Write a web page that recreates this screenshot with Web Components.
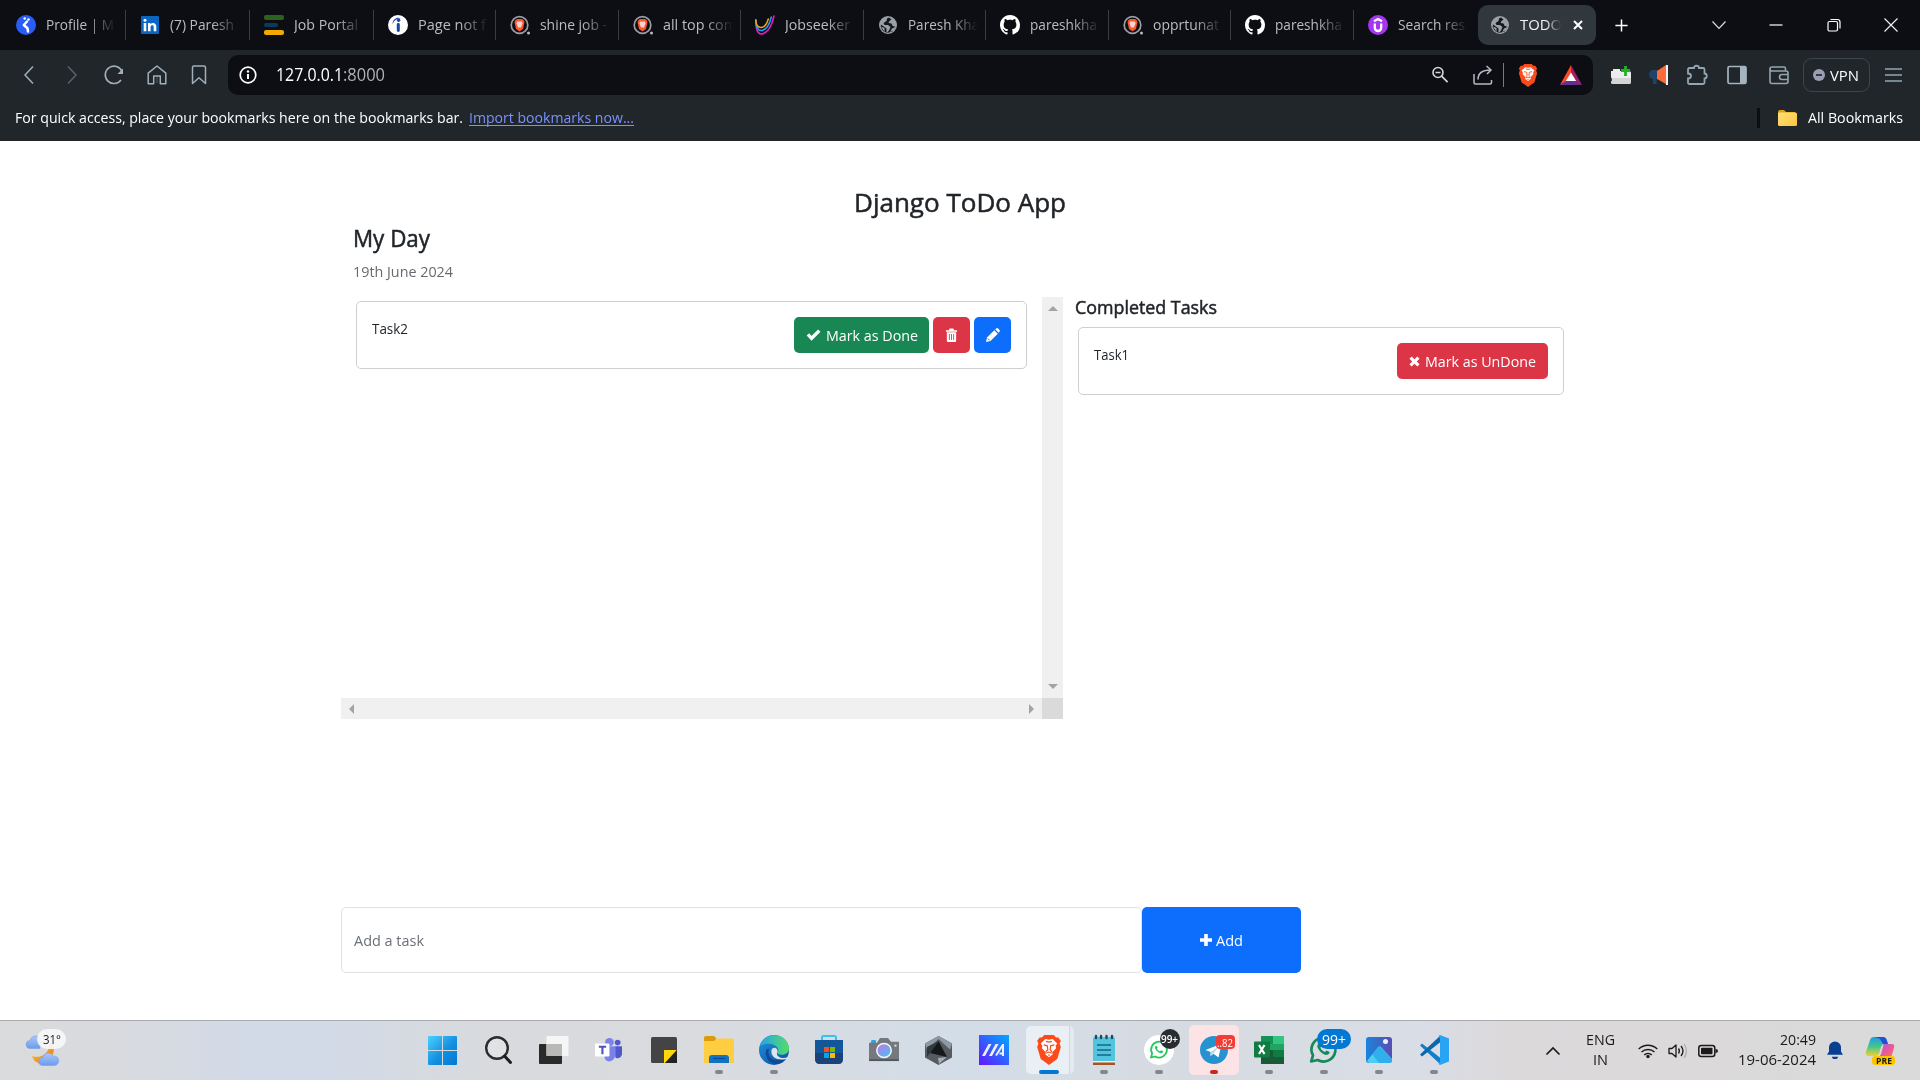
<!DOCTYPE html>
<html lang="en">
<head>
<meta charset="utf-8">
<title>TODO</title>
<style>
html,body{margin:0;height:1080px;width:1920px;overflow:hidden;background:#fff;font-family:"Open Sans","Noto Sans",sans-serif}
body{display:flex;flex-direction:column}
</style>
</head>
<body>
<browser-tabs></browser-tabs>
<browser-toolbar></browser-toolbar>
<bookmarks-bar></bookmarks-bar>
<todo-app></todo-app>
<task-bar></task-bar>
<script>
const lion = `<path d="M5 2 7 0h8l2 2 2 0 2 3-1 2 1 3-3 10-3 2-4 3-4-3-3-2L1 10l1-3-1-2 2-3z" fill="#fb4b1a"/><path d="M11 4l3-.6 4 3.6-1.4 2 .4 2-3.4 3.6.6 1.4-3.2 2.5L7.800 16l.6-1.400L5 11l.4-2L4 7l4-3.600z" fill="#fff"/><path d="M6.500 8.300 9.600 9l.4 3.500L8.300 14M15.500 8.300 12.400 9l-.4 3.500 1.700 1.500M8.700 15.200 11 14.200l2.300 1M8.500 5.300 11 6l2.500-.700M11 16v1.500" fill="none" stroke="#fb4b1a" stroke-width="1"/>`;
const phone = c => `<path d="M10.200 8.600c-.9 0-1.900 1.300-1.900 2.600 0 3 5.300 8.700 9.300 8.700 1.800 0 3-1.400 3.100-2.800l-3.200-1.700-1.600 1.700c-2-.7-3.700-2.400-4.500-4.300l1.200-1.500z" fill="${c}"/>`;
const bubble = c => `<path d="M2.200 26.500 4 20.400A12 12 0 1 1 8.600 25z" fill="none" stroke="${c}" stroke-width="2.700" stroke-linejoin="round"/>` + phone(c);
const cloud = `fill="url(#wc)" stroke="#6f9fe8" stroke-width=".5"`;
// name -> [viewBox width, viewBox height, markup]
const ICONS = {
  pen:[20,20,`<circle cx="10" cy="10" r="10" fill="#2a5cf6"/><path d="M11 6.500 7.800 10l3.700 3.200.5 3.300" fill="none" stroke="#fff" stroke-width="2.500" stroke-linecap="round" stroke-linejoin="round"/><circle cx="8.700" cy="3.500" r="1.200" fill="#fff"/><circle cx="12.500" cy="4.500" r="1.200" fill="#fff"/>`],
  linkedin:[20,20,`<rect x="1" y="1" width="18" height="18" rx="1" fill="#0a66c2"/><path d="M3.700 8h2.600v8.300H3.700zM8 8h2.500v1.200c1.700-2.200 5.800-1.800 5.800 2.300v4.800h-2.600V12c0-2.600-3.100-2.300-3.100 0v4.300H8z" fill="#fff"/><circle cx="5" cy="5.300" r="1.500" fill="#fff"/>`],
  bars:[20,20,`<rect x="0" y="0" width="20" height="5" rx="2" fill="#2b621f"/><rect x="0" y="8" width="14" height="4" rx="2" fill="#0b3958"/><rect x="0" y="15" width="20" height="5" rx="2" fill="#f2a900"/>`],
  indeed:[20,20,`<circle cx="10" cy="10" r="10" fill="#fff"/><rect x="8.800" y="8" width="3" height="9" rx="1.400" fill="#17479e"/><circle cx="10.600" cy="5.300" r="1.700" fill="#17479e"/><path d="M4.500 9c.5-5 4.500-7.500 8.500-5.500-3-.5-6.500 1-8.500 5.500z" fill="#17479e"/>`],
  bravesearch:[20,20,`<circle cx="9.500" cy="10" r="8.300" fill="none" stroke="#9b9da1" stroke-width="1.700"/><path d="M5 5.500 7 4h5l2 1.500.4 2L13 14l-3.500 2.500L6 14 4.600 7.500z" fill="#fb5430"/><path d="M7 6.500h5l.5 2-1.500 4H8L6.500 8.500z" fill="#f6d3cb"/><circle cx="18.500" cy="18" r="1.500" fill="#bbb"/>`],
  swirl:[20,20,`<g fill="none" stroke-width="1.500" stroke-linecap="round"><path d="M.8 5C1 14 2 19 6 19c6 0 11-8 13-18" stroke="#e71bc8"/><path d="M.8 5C1 12 2.500 15.500 6 15.500c5 0 8.500-6 10.300-13.500" stroke="#16a8e8"/><path d="M.8 5C1 10 3 12.500 6 12.500c3.500 0 6-4 7.300-8.500" stroke="#f4a41c"/></g>`],
  globe:[20,20,`<circle cx="10" cy="10" r="9" fill="#9aa0a6"/><path d="M11 2.500 9 3.500 8.500 6l-3 2 1 2h3.500l2.500 2-1 2.500-2 3h-1v-4L3 9.500 2.700 12 5 16l4 2 5.500-1.500L17.500 12l-3-1.200-1-2.300-3-.5 1-2 2-1.500z" fill="#14181d" fill-rule="evenodd"/><path d="M3 11.500 6.500 13v4M12 17l2-3.500 3.300-1.500-1 3z" fill="#9aa0a6"/>`],
  github:[16,16,`<path fill="#fff" d="M8 0C3.580 0 0 3.580 0 8c0 3.540 2.290 6.530 5.470 7.590.4.070.55-.17.55-.38 0-.19-.01-.82-.01-1.490-2.010.37-2.530-.49-2.690-.94-.09-.23-.48-.94-.82-1.130-.28-.15-.68-.52-.01-.53.630-.01 1.080.58 1.230.82.720 1.210 1.870.87 2.330.66.070-.52.280-.87.510-1.070-1.780-.2-3.640-.89-3.640-3.950 0-.87.310-1.590.82-2.150-.08-.2-.36-1.020.08-2.120 0 0 .67-.21 2.200.82.640-.18 1.320-.27 2-.27s1.360.09 2 .27c1.530-1.040 2.200-.82 2.200-.82.440 1.100.160 1.920.080 2.120.510.56.82 1.270.82 2.150 0 3.070-1.870 3.750-3.650 3.950.290.25.54.73.54 1.480 0 1.070-.01 1.930-.01 2.200 0 .21.150.46.55.38A8.010 8.010 0 0 0 16 8c0-4.420-3.580-8-8-8z"/>`],
  udemy:[20,20,`<circle cx="10" cy="10" r="10" fill="#a435f0"/><path d="M6 6.200 10 4l4 2.200M6.800 8.500v4.300a3.200 3.200 0 0 0 6.400 0V8.500" fill="none" stroke="#fff" stroke-width="2.300"/>`],
  x:[16,16,`<path d="M4 4l8 8M12 4l-8 8" stroke="#fff" stroke-width="2"/>`],
  plus:[16,16,`<path d="M8 1.500v13M1.500 8h13" stroke="#fff" stroke-width="1.600"/>`],
  chev:[16,16,`<path d="M1.500 4.500 8 11.300l6.500-6.800" fill="none" stroke="#ddd" stroke-width="1.200"/>`],
  min:[16,16,`<path d="M1.500 8h13" stroke="#fff" stroke-width="1.200"/>`],
  restore:[16,16,`<rect x="2" y="4.500" width="9.500" height="9.500" rx="1.500" fill="none" stroke="#fff" stroke-width="1.200"/><path d="M4.500 2.500h7a2.500 2.500 0 0 1 2.500 2.500v6.500" fill="none" stroke="#fff" stroke-width="1.200"/>`],
  winx:[16,16,`<path d="M1.500 1.500l13 13M14.500 1.500l-13 13" stroke="#eee" stroke-width="1.200"/>`],
  back:[20,20,`<path d="M14 1.500 6 10l8 8.500" fill="none" stroke="#9fb0bb" stroke-width="1.500"/>`],
  fwd:[20,20,`<path d="M6 1.500 14 10l-8 8.500" fill="none" stroke="#56636b" stroke-width="1.500"/>`],
  reload:[20,20,`<path d="M17 15A8.700 8.700 0 1 1 18 6.500" fill="none" stroke="#9fb0bb" stroke-width="1.600"/><path d="M19 3.500v5.500h-5.500z" fill="#9fb0bb"/>`],
  home:[20,20,`<path d="M1.200 18.700V8.200L10 1l8.800 7.200v10.500h-5.500V11H6.700v7.700z" fill="none" stroke="#9fb0bb" stroke-width="1.500" stroke-linejoin="round"/><path d="M10 12v6" stroke="#56636b"/>`],
  mark:[20,20,`<path d="M3.500 18.500v-16q0-1.500 1.500-1.500h10q1.500 0 1.500 1.500v16L10 12.800z" fill="none" stroke="#9fb0bb" stroke-width="1.500" stroke-linejoin="round"/>`],
  info:[18,18,`<circle cx="9" cy="9" r="7.800" fill="none" stroke="#fff" stroke-width="1.700"/><path d="M9 8v5" stroke="#fff" stroke-width="2"/><circle cx="9" cy="5.500" r="1.200" fill="#fff"/>`],
  zoomout:[18,18,`<circle cx="7" cy="6.500" r="5" fill="none" stroke="#d3d5d7" stroke-width="1.600"/><path d="M4.500 6.500h5M10.600 10.200l6 6" stroke="#d3d5d7" stroke-width="1.700"/>`],
  share:[20,20,`<path d="M1 9v8.500q0 1.500 1.500 1.500H17q1.500 0 1.500-1.500V15M5 14.500c0-5 3-9.500 12.500-9.500M13.500 1l4.500 4-4 4" fill="none" stroke="#b6bcc1" stroke-width="1.500"/>`],
  lion:[22,25,lion],
  bat:[22,20,`<path d="M11 0 0 20l6-3 5-8.500z" fill="#ff4724"/><path d="M11 0v8.500L16 17l6 3z" fill="#9e1f63"/><path d="M0 20h22l-6-4H6z" fill="#662d91"/><path d="M11 7.500 5.800 16h10.400z" fill="#fff"/>`],
  addon:[20,20,`<path d="M0 6h2V4h7v2h9q2 0 2 2v9q0 2-2 2H2q-2 0-2-2 2-1 1-3L0 12z" fill="#ececec"/><path d="M1 13h19v4q0 2-2 2H2q-2 0-2-2 1-1 1-4z" fill="#d2d4d5"/><path d="M14.500 1v10M10 5.500h9" stroke="#22b324" stroke-width="2.800"/>`],
  horn:[20,20,`<path d="M3 5h6v9H7.500v5H4v-5H3Q0 13 0 9.500T3 5z" fill="#1f4468"/><path d="M8 6 17 0v19l-9-5z" fill="#ff6b38"/><rect x="17" width="2" height="20" fill="#eef2f5"/>`],
  puzzle:[20,20,`<path d="M1 4.500Q1 3 2.500 3H7c0-3 5-3 5 0h4q1.500 0 1.500 1.500V8.500c3 0 3 5 0 5v4q0 1.500-1.500 1.500H2.500Q1 19 1 17.500v-4c4 0 4-5 0-5z" fill="none" stroke="#93a5b0" stroke-width="1.800"/>`],
  side:[20,20,`<rect x="1" y="1.500" width="18" height="17" rx="1.500" fill="none" stroke="#a4b5bf" stroke-width="1.700"/><rect x="13" y="2" width="6" height="16" fill="#a4b5bf"/>`],
  wallet:[20,20,`<path d="M3 2h12q1.500 0 1.500 1.500V6H3Q1 6 1 4t2-2zM1 4v12.500Q1 18.500 3 18.500h14q2 0 2-2V8q0-2-2-2M19 9.500h-6a2.500 2.500 0 0 0 0 5h6" fill="none" stroke="#93a5b0" stroke-width="1.600"/>`],
  vpn:[12,12,`<circle cx="6" cy="6" r="6" fill="#9c9cb6"/><path d="M3 6h6" stroke="#23272c" stroke-width="1.700"/>`],
  menu:[18,16,`<path d="M0 2h17M0 8h17M0 14h17" stroke="#93a5b0" stroke-width="1.500"/>`],
  folder:[20,16,`<path d="M0 2q0-2 2-2h4l2 2h9v5H0z" fill="#e3a214"/><rect x="0" y="2.500" width="19" height="13.500" rx="1.500" fill="url(#fg)"/><defs><linearGradient id="fg" x2="1" y2="1"><stop stop-color="#ffe07c"/><stop offset="1" stop-color="#fbc73c"/></linearGradient></defs>`],
  check:[16,14,`<path d="M2 6.800 6 11 14.200 2.800" fill="none" stroke="#fff" stroke-width="3.600"/>`],
  cross:[12,12,`<path d="M1.700 1.700l8.600 8.600M10.300 1.700l-8.600 8.600" stroke="#fff" stroke-width="3.500"/>`],
  trash:[14,14,`<path d="M5 .5h4l.8 1.700H13v1.500H1V2.200h3.200z" fill="#fff"/><path d="M2 4.300h10V13q0 1-1 1H3q-1 0-1-1z" fill="#fff"/><path d="M4.700 6v6M7 6v6M9.300 6v6" stroke="#dc3545" stroke-width=".9"/>`],
  pencil:[14,14,`<path d="M0 14l1-4.500L8.300 2.200l3.500 3.500L4.500 13z" fill="#fff"/><path d="M9.200 1.300 10.200.4q1-.8 2 .2l1.300 1.300q.9 1 0 1.900l-.9 1z" fill="#fff"/><path d="M1.800 10.500l1.800 1.800" stroke="#0d6efd" stroke-width="1"/>`],
  add:[12,12,`<path d="M6 0v12M0 6h12" stroke="#fff" stroke-width="3.600"/>`],
  weather:[44,38,`<defs><linearGradient id="wc" x2="0" y2="1"><stop stop-color="#a9c8fb"/><stop offset="1" stop-color="#6d9bea"/></linearGradient><linearGradient id="wm" x2="1" y2="1"><stop stop-color="#ffc038"/><stop offset="1" stop-color="#ec7a12"/></linearGradient></defs><path d="M4 18.500a4 4 0 0 1 0-8 6 6 0 0 1 10-3v11z" ${cloud}/><path d="M27 13c4 12-6 26-17 19-2-1-3-4-4-6 8 3 17-2 17-11z" fill="url(#wm)"/><path d="M17 35.500a4 4 0 0 1-.5-8 6 6 0 0 1 11-1.500 4.500 4.500 0 0 1 1 9.500z" ${cloud}/>`],
  win:[29,29,`<defs><linearGradient id="wi" x2="1" y2="1"><stop stop-color="#4cd0ff"/><stop offset=".55" stop-color="#1390e0"/><stop offset="1" stop-color="#0078d4"/></linearGradient></defs><path d="M0 1q0-1 1-1h13v14H0zM15 0h13q1 0 1 1v13H15zM0 15h14v14H1q-1 0-1-1zM15 15h14v13q0 1-1 1H15z" fill="url(#wi)"/>`],
  search:[28,29,`<circle cx="12" cy="12" r="10.800" fill="#e8e8ea" fill-opacity=".6" stroke="#2c2c2e" stroke-width="2.400"/><path d="M19.500 20l6 6.500" stroke="#1c1c1e" stroke-width="3" stroke-linecap="round"/>`],
  tasks:[30,29,`<rect x="0" y="8" width="23" height="20" rx="1" fill="#2a2a28"/><rect x="7.500" y="0" width="22" height="20" rx="1" fill="#f6f6f6"/><rect x="7.500" y="8" width="15.500" height="12" fill="#b9b9b8"/>`],
  teams:[28,26,`<circle cx="15" cy="4.500" r="4.500" fill="#7b83eb"/><circle cx="23.500" cy="5" r="3" fill="#5059c9"/><path d="M10 9h11v9q0 7-6.500 7.500Q10 25 10 20z" fill="#7b83eb"/><path d="M21 9h7v9q-1 4-5 4-2 0-2-2z" fill="#5059c9"/><rect x="0" y="6" width="15" height="14" rx="1" fill="#fff"/><path d="M4 9.500h7.500M7.700 9.500v8" stroke="#4b53bc" stroke-width="2.200"/>`],
  sticky:[26,26,`<rect width="26" height="26" rx="1.500" fill="#444444"/><path d="M13 13h13L14 26h-1z" fill="#ffd60a"/><path d="M26 13v13H14z" fill="#232323"/>`],
  files:[30,28,`<path d="M0 2q0-2 2-2h8l2.500 2.500L10 6H0z" fill="#dc9b08"/><path d="M0 5h10l3-2.500h15q2 0 2 2V27H0z" fill="#ffcd42"/><path d="M5 27v-5q0-3 3-3h14q3 0 3 3v5z" fill="#1173c4"/><path d="M9 22.500h12" stroke="#0b4a8f" stroke-width="1.200"/>`],
  edge:[30,30,`<defs><linearGradient id="e1" x2="1"><stop stop-color="#22a5e8"/><stop offset="1" stop-color="#55dc67"/></linearGradient><linearGradient id="e2" x2=".7" y2="1"><stop stop-color="#2194dc"/><stop offset="1" stop-color="#0d5aad"/></linearGradient></defs><circle cx="15" cy="15" r="15" fill="url(#e2)"/><path d="M1 11C4-3 28-4 30 13c0 6-6 8-11 6-2-2 1-2 0-5-2-5-11-7-18-3z" fill="url(#e1)"/><path d="M10 14c-3 10 8 15 18 8-5 10-19 9-21-2-1-4 1-7 3-6z" fill="#114a94"/><path d="M12.500 15c2-5 8-1 5.500 3-1 4 6 6.500 11 4l1 1c-8 3.500-19 1-17.500-8z" fill="#dce4ec"/>`],
  store:[30,30,`<path d="M8 7V2.500Q8 1 9.500 1h11Q22 1 22 2.500V7" fill="none" stroke="#39c1f3" stroke-width="2"/><path d="M1 5h28v19q0 5-5 5H6q-5 0-5-5z" fill="#13579b"/><path d="M1 18h28v6q0 5-5 5H6q-5 0-5-5z" fill="#1f3a6b" opacity=".7"/><path d="M10 12h5v5h-5z" fill="#f25022"/><path d="M16 12h5v5h-5z" fill="#7fba00"/><path d="M10 18h5v5h-5z" fill="#00a4ef"/><path d="M16 18h5v5h-5z" fill="#ffb900"/>`],
  camera:[30,26,`<rect x="2" y="2" width="5" height="4" rx="1.500" fill="#2aa5df"/><path d="M0 5h8l3-5h8l3 4h8v20H0z" fill="#74797e"/><path d="M0 22h30v2H0z" fill="#53585c"/><circle cx="15" cy="13" r="8" fill="#f6f7f8"/><circle cx="15" cy="13" r="6.500" fill="url(#cm)"/><circle cx="26.500" cy="8" r="1.200" fill="#ddd"/><defs><linearGradient id="cm" x2="1" y2="1"><stop stop-color="#c278e4"/><stop offset="1" stop-color="#3fc4f3"/></linearGradient></defs>`],
  armory:[27,29,`<path d="M13.500 0 27 7.500v14L13.500 29 0 21.500v-14z" fill="#555b61"/><path d="M13.500 0 27 7.500l-2 6L13.500 3 2 14 0 7.500z" fill="#8d9aa4"/><path d="M13.500 5 22 21l-17-4z" fill="#15181b"/><path d="M13.500 5 5 17l-3 4V11z" fill="#33383d"/><path d="M22 21 14 28l-1-6z" fill="#a7acb1"/>`],
  asus:[30,30,`<defs><linearGradient id="as" x1="0" y1="1" x2="1" y2="0"><stop stop-color="#6414ff"/><stop offset="1" stop-color="#00aaff"/></linearGradient></defs><rect width="30" height="30" fill="url(#as)"/><path d="M3 21h3l6.500-12h-3zM10 21h3l6.500-12h-3z" fill="#eef"/><path d="M24 9v12M17 20.500l7-11M20.500 18.500h3" stroke="#eef" stroke-width="2" fill="none"/>`],
  notes:[24,30,`<rect x="1" y="2" width="22" height="25" rx="1.500" fill="#52c4dd"/><path d="M5 10h14M5 15h14M5 20h14" stroke="#166784" stroke-width="1.500"/><path d="M4 1v2M9 1v2M14.500 1v2M20 1v2" stroke="#174e63" stroke-width="2.400" stroke-linecap="round"/><path d="M1 27h22v3H1z" fill="#a6541c"/><path d="M1 26h22v1.500H1z" fill="#eef"/>`],
  waround:[30,30,`<circle cx="15" cy="15" r="15" fill="#fff"/><g transform="translate(5.500 5) scale(.66)">${bubble('#20cb5b')}</g>`],
  wa:[30,30,bubble('#15895b')],
  tg:[28,28,`<circle cx="14" cy="14" r="14" fill="#2493cf"/><path d="M5.500 14 21.500 7.800 18.500 21.500l-5-3.700-3 2.300.2-4z" fill="#fff"/><path d="M10.800 16 19 10l-5.500 7.500-3 2.500z" fill="#b9d9ec"/>`],
  excel:[30,28,`<path d="M7 0h23v28H7z" fill="#21a366"/><path d="M7 0h12v8H7z" fill="#159255"/><path d="M19 0h11v8H19z" fill="#33c481"/><path d="M7 14h23v14H7z" fill="#185c37"/><path d="M19 14h11v7H19z" fill="#107c41"/><rect y="5.500" width="16" height="16" rx="1" fill="#107c41"/><path d="M5 9l5.500 9M10.500 9 5 18" stroke="#fff" stroke-width="2.200"/>`],
  photos:[26,26,`<defs><linearGradient id="ph" x2="1"><stop stop-color="#1785dc"/><stop offset="1" stop-color="#5b4cb0"/></linearGradient></defs><rect width="26" height="26" rx="3" fill="url(#ph)"/><path d="M1 24 12 10q1.500-1.500 3 0l11 12v1q0 3-3 3H3z" fill="#4dcdf4"/><path d="M13 9 26 22v1q0 3-3 3H13L6 17z" fill="#1c9ce8" opacity=".6"/><circle cx="19.500" cy="4.500" r="2.500" fill="#eef"/>`],
  vscode:[30,30,`<path d="M1 10.500 3 8.500 21.500 23v6.500z" fill="#0f7fcb"/><path d="M1 19.500l2 2L21.500 7V.5z" fill="#0b67ad"/><path d="M21 0l9 3.500v23L21 30l-1.500-1 1.500-2.500v-23L19.500 1z" fill="#29a3f3"/>`],
  up:[16,16,`<path d="M1.500 11.500 8 5l6.500 6.500" fill="none" stroke="#1b1b1b" stroke-width="1.700"/>`],
  wifi:[20,16,`<g fill="none" stroke="#1b1b1b" stroke-width="1.400"><path d="M.7 6a13.500 13.500 0 0 1 18.600 0M3.500 9a9.500 9.500 0 0 1 13 0M6.200 12a5.600 5.600 0 0 1 7.600 0"/></g><circle cx="10" cy="13.500" r="1.700" fill="#1b1b1b"/>`],
  sound:[20,16,`<path d="M1 5.500h3L8 2v12l-4-3.500H1z" fill="none" stroke="#1b1b1b" stroke-width="1.300" stroke-linejoin="round"/><path d="M10.500 5.500q1.800 2.500 0 5M13 3q4 5 0 10" fill="none" stroke="#1b1b1b" stroke-width="1.300"/><path d="M16 1q5 7 0 14" fill="none" stroke="#aaa" stroke-width="1.200"/>`],
  batt:[20,14,`<rect x=".8" y="1.500" width="16" height="11" rx="2.500" fill="none" stroke="#1b1b1b" stroke-width="1.500"/><rect x="3" y="3.700" width="11.500" height="6.600" rx=".8" fill="#1b1b1b"/><path d="M17.500 5q2.500 0 2.500 2t-2.500 2z" fill="#1b1b1b"/>`],
  bell:[16,20,`<path d="M0 14.500 2 11V6.500a6 6 0 0 1 12 0V11l2 3.500zM5 16.500h6a3 2.500 0 0 1-6 0z" fill="#0b3f91"/>`],
  copilot:[29,28,`<defs><linearGradient id="c1" x2="0" y2="1"><stop stop-color="#1d9bea"/><stop offset=".5" stop-color="#46c58b"/><stop offset="1" stop-color="#f1cf30"/></linearGradient><linearGradient id="c2" x2="1" y2="1"><stop stop-color="#a35af0"/><stop offset=".6" stop-color="#ee5b8d"/><stop offset="1" stop-color="#ff7d4a"/></linearGradient></defs><path d="M8 0h9q3 0 4 4l1 3h-4q-2 0-3 3l-2 7q-1 2-3 2H3q-4 0-3-4L4 3q1-3 4-3z" fill="url(#c1)"/><path d="M9 0h8q3 0 4 4l1 3h-5L14 2z" fill="#2152d6"/><path d="M18 7h8q3 0 2 4l-3 10H11q3-1 4-4l2-7q0-3 1-3z" fill="url(#c2)"/>`]
};

class UiIcon extends HTMLElement{
  connectedCallback(){
    if(this.shadowRoot) return;
    const [vw,vh,body]=ICONS[this.getAttribute('name')], w=+(this.getAttribute('w')||vw), h=+(this.getAttribute('h')||w*vh/vw);
    this.attachShadow({mode:'open'}).innerHTML=`<style>:host{display:block;flex:none;width:${w}px;height:${h}px}svg{display:block;overflow:visible}</style><svg width="${w}" height="${h}" viewBox="0 0 ${vw} ${vh}" preserveAspectRatio="none">${body}</svg>`;
  }
}
customElements.define('ui-icon',UiIcon);

// One line of text condensed or widened to the width given in "w".
class FitText extends HTMLElement{
  connectedCallback(){
    if(this.shadowRoot) return;
    const g=(n,d)=>this.getAttribute(n)||d, w=+g('w');
    this.attachShadow({mode:'open'}).innerHTML=`<style>:host{display:block;flex:none;width:${w}px;white-space:nowrap;font:${g('weight',400)} ${g('size',15)}px/${g('lh',20)}px "Open Sans","Noto Sans",sans-serif}:host([bold]){-webkit-text-stroke:.5px currentColor}span{display:inline-block;vertical-align:top;transform-origin:0 0}</style><span><slot></slot></span>`;
    const s=this.shadowRoot.querySelector('span');
    if(s.offsetWidth) s.style.transform=`scaleX(${w/s.getBoundingClientRect().width})`;
  }
}
customElements.define('fit-text',FitText);

const define=(name,html)=>customElements.define(name,class extends HTMLElement{
  connectedCallback(){
    if(this.shadowRoot) return;
    const t=document.createElement('template');
    t.innerHTML=typeof html==='function'?html(this):html;
    this.attachShadow({mode:'open'}).append(t.content.cloneNode(true));
  }
});

define('browser-tab',el=>{
  const a=el.hasAttribute('active'), tw=+el.getAttribute('tw');
  return `<style>:host{display:flex;align-items:center;box-sizing:border-box;flex:none;width:${el.getAttribute('width')}px;height:${a?40:30}px;padding-left:${el.getAttribute('pad')||14}px;color:${a?'#f1f3f4':'#bcbdbf'};${a?'background:#30383d;border-radius:10px;':'border-right:1px solid #3b3d41;'}}:host([last]){border-color:transparent}
  .l{margin-left:10px;width:${a?42:Math.max(tw,72)}px;height:22px;-webkit-mask-image:linear-gradient(90deg,#000 ${a?26:42}px,transparent ${a?41:70}px)}ui-icon[name=x]{margin-left:8px}</style>
  <ui-icon name="${el.getAttribute('icon')}" w="20" h="20"></ui-icon><div class="l"><fit-text size="15" lh="20" w="${tw}">${el.getAttribute('label')}</fit-text></div>${a?'<ui-icon name="x" w="16"></ui-icon>':''}`;
});

const TABS=[[126,16,'pen','Profile | M',68],[124,14,'linkedin','(7) Paresh',64],[124,14,'bars','Job Portal',64],[122,14,'indeed','Page not f',68],[123,14,'bravesearch','shine job -',67],[122,14,'bravesearch','all top com',74],[123,14,'swirl','Jobseeker',65],[122,14,'globe','Paresh Kha',71],[123,14,'github','pareshkha',67],[122,14,'bravesearch','opprtunat',66],[123,14,'github','pareshkha',67],[124,14,'udemy','Search res',67]];
define('browser-tabs',`<style>:host{display:flex;align-items:center;flex:none;height:50px;background:#0d0e13;color:#fff}.g{flex:1}.w{display:flex;gap:41.300px;padding-right:21px}</style>
${TABS.map(([w,p,i,l,tw],n)=>`<browser-tab width="${w}" pad="${p}" icon="${i}" label="${l}" tw="${tw}" ${n===11?'last':''}></browser-tab>`).join('')}
<browser-tab active width="118" pad="12" icon="globe" label="TODO" tw="42"></browser-tab>
<ui-icon name="plus" w="15" style="margin-left:18px"></ui-icon><div class="g"></div>
<div class="w"><ui-icon name="chev" w="16"></ui-icon><ui-icon name="min" w="16"></ui-icon><ui-icon name="restore" w="16"></ui-icon><ui-icon name="winx" w="16"></ui-icon></div>`);

define('browser-toolbar',`<style>:host{display:flex;align-items:center;flex:none;height:50px;background:#21262a;color:#fff}
.n{display:flex;gap:22.500px;width:209px;padding-left:19px}.u{display:flex;align-items:center;box-sizing:border-box;width:1365px;height:40px;border-radius:10px;background:#0d0e13;padding:0 11px}
.t{display:flex;flex:1;margin:-2px 0 0 19px}.d{width:1px;height:24px;background:#777c80;margin:0 14px 0 10px}
.e{display:flex;align-items:center;margin-left:18px}.v{display:flex;align-items:center;gap:5px;box-sizing:border-box;width:67px;height:34px;border:1px solid #3d464c;border-radius:9px;padding-left:9px;margin:0 15px 0 15px}</style>
<div class="n"><ui-icon name="back" w="20"></ui-icon><ui-icon name="fwd" w="20"></ui-icon><ui-icon name="reload" w="20"></ui-icon><ui-icon name="home" w="20"></ui-icon><ui-icon name="mark" w="20"></ui-icon></div>
<div class="u"><ui-icon name="info" w="18"></ui-icon><div class="t"><fit-text size="17.500" lh="24" w="67">127.0.0.1</fit-text><fit-text size="17.500" lh="24" w="42" style="color:#adb0b5">:8000</fit-text></div>
<ui-icon name="zoomout" w="18"></ui-icon><ui-icon name="share" w="20" style="margin-left:24px"></ui-icon><div class="d"></div><ui-icon name="lion" w="20" h="23"></ui-icon><ui-icon name="bat" w="22" style="margin-left:22px"></ui-icon></div>
<div class="e"><ui-icon name="addon" w="20"></ui-icon><ui-icon name="horn" w="20" style="margin-left:18px"></ui-icon><ui-icon name="puzzle" w="20" style="margin-left:18px"></ui-icon><ui-icon name="side" w="20" style="margin-left:20px"></ui-icon><ui-icon name="wallet" w="20" style="margin-left:22px"></ui-icon>
<div class="v" style="margin-left:14px"><ui-icon name="vpn" w="12"></ui-icon><fit-text size="15" lh="21" w="29">VPN</fit-text></div><ui-icon name="menu" w="18"></ui-icon></div>`);

define('bookmarks-bar',`<style>:host{display:flex;align-items:center;box-sizing:border-box;flex:none;height:41px;padding:0 17px 6px 15px;background:#21262a;color:#fff}a{color:#7c91fa;border-bottom:1px solid #7c91fa;height:16px;margin:0 0 0 6px}a fit-text{margin-top:-3px}.s{width:3px;height:20px;background:#0d0e13;margin:0 18px 0 auto}fit-text{margin-top:-1px}</style>
<fit-text size="15" lh="22" w="448">For quick access, place your bookmarks here on the bookmarks bar.</fit-text><a><fit-text size="15" lh="22" w="165">Import bookmarks now...</fit-text></a><div class="s"></div><ui-icon name="folder" w="20"></ui-icon><fit-text size="15" lh="22" w="95" style="margin-left:10px">All Bookmarks</fit-text>`);

define('app-button',el=>`<style>:host{display:flex;box-sizing:border-box;flex:none;justify-content:center;align-items:center;gap:${el.getAttribute('gap')||5}px;height:36px;border-radius:5px;color:#fff;background:var(--c)}</style><slot></slot>`);
define('task-card',`<style>:host{display:flex;box-sizing:border-box;height:68px;border:1px solid #cfcfcf;border-radius:5px;padding:15px 15px 15px 15px;gap:4px}.t{flex:1}</style><div class="t"><slot name="title"></slot></div><slot></slot>`);
define('scroll-frame',`<style>:host{display:grid;grid-template:401px 21px/701px 21px;flex:none}.c{padding:4px 15px}.v,.h{display:flex;justify-content:space-between;align-items:center;background:#f0f0f0}.v{flex-direction:column;padding:9px 0}.h{padding:0 8px}.k{background:#dadada}i{border:5px solid transparent}.a{border-top:0;border-bottom-color:#a3a3a3}.b{border-bottom:0;border-top-color:#a3a3a3}.l{border-left:0;border-right-color:#a3a3a3}.r{border-right:0;border-left-color:#a3a3a3}</style>
<div class="c"><slot></slot></div><div class="v"><i class="a"></i><i class="b"></i></div><div class="h"><i class="l"></i><i class="r"></i></div><div class="k"></div>`);

define('todo-app',`<style>:host{display:block;flex:1;padding:45px 0 0 341px;color:#212529}.b{display:flex;margin-top:14px}.r{width:504px;padding-left:12px}.f{display:flex;margin-top:188px}.i{box-sizing:border-box;width:801px;height:66px;border:1px solid #dee2e6;border-radius:5px;padding-left:12px;color:#6a7076}</style>
<fit-text bold size="25.500" lh="33" w="212" style="margin:0 0 -1px 513px">Django ToDo App</fit-text>
<fit-text bold size="23" lh="31" w="77" style="margin:5px 0 5px 12px">My Day</fit-text>
<fit-text size="15" lh="25" w="100" style="margin:0 0 -1px 12px;color:#666b70">19th June 2024</fit-text>
<div class="b"><scroll-frame><task-card><fit-text slot="title" size="15" lh="23" w="36">Task2</fit-text>
<app-button style="--c:#198754;width:135px"><ui-icon name="check" w="15"></ui-icon><fit-text size="15" lh="20" w="92">Mark as Done</fit-text></app-button>
<app-button style="--c:#dc3545;width:37px"><ui-icon name="trash" w="13" h="14"></ui-icon></app-button>
<app-button style="--c:#0d6efd;width:37px"><ui-icon name="pencil" w="14"></ui-icon></app-button></task-card></scroll-frame>
<div class="r"><fit-text bold size="18" lh="21" w="142">Completed Tasks</fit-text>
<task-card style="margin:9px 0 0 3px;width:486px"><fit-text slot="title" size="15" lh="23" w="35">Task1</fit-text><app-button style="--c:#dc3545;width:151px"><ui-icon name="cross" w="11"></ui-icon><fit-text size="15" lh="20" w="111">Mark as UnDone</fit-text></app-button></task-card></div></div>
<div class="f"><div class="i"><fit-text size="15" lh="65" w="70">Add a task</fit-text></div><app-button gap="4" style="--c:#0d6efd;width:159px;height:66px"><ui-icon name="add" w="12"></ui-icon><fit-text size="15" lh="21" w="27">Add</fit-text></app-button></div>`);

// A taskbar slot: icon, optional tile behind, running mark below, badge over it.
define('task-item',el=>{
  const t=el.getAttribute('tile'), r=el.getAttribute('run');
  return `<style>:host{display:flex;position:relative;flex:none;flex-direction:column;align-items:center;box-sizing:border-box;width:50px;height:50px;margin:4px 2.500px 0;border-radius:5px;${t==='red'?'background:#fce4e6;':''}}
  ${t==='white'?':host{background:linear-gradient(90deg,#e9eff5 43px,#cfd6dd 43px,#cfd6dd 44px,#e4eaf0 44px);width:48px;margin:5px 2.500px 0 4.500px;height:48px;padding-right:2px}':''}
  .b{height:45px;display:flex;align-items:center;margin-top:${t==='white'?-1:0}px;padding-top:5px;box-sizing:border-box}.m{width:${r==='blue'?20:8}px;height:4px;border-radius:2px;background:${r==='blue'?'#0078d4':r==='red'?'#c42b1c':r?'#83868a':'transparent'}}</style><div class="b"><slot></slot></div><div class="m"></div><slot name="badge"></slot>`;
});
define('count-badge',el=>`<style>:host{position:absolute;display:flex;align-items:center;justify-content:center;box-sizing:border-box;${el.getAttribute('box')}}</style><slot></slot>`);

const item=(i,w,h,run='',x='')=>`<task-item run="${run}" ${x}><ui-icon name="${i}" w="${w}" h="${h}"></ui-icon></task-item>`;
define('task-bar',`<style>:host{display:flex;box-sizing:border-box;flex:none;height:60px;border-top:1px solid #a9abae;color:#1b1b1b;background:linear-gradient(90deg,#dadbdc 0,#d9dade 110px,#d3dae7 240px,#d3dae7 340px,#d8dadd 480px,#d9dbdf 700px,#d3dde8 960px,#d7dbe1 1200px,#d9dde6 1420px,#dcd9db 1510px,#dadada 1920px)}
.w{position:relative;width:385.500px;padding:9px 0 0 26px;box-sizing:content-box}.a{display:flex}.r{display:flex;align-items:center;margin-left:auto;padding-right:25px}.x{display:flex;flex-direction:column;align-items:center;margin-top:-1px}.p{position:relative}</style>
<div class="w"><ui-icon name="weather" w="44" h="38"></ui-icon><count-badge box="left:37px;top:8px;width:29px;height:20px;border-radius:10px;background:#f5f6f7ee"><fit-text size="13.500" lh="19" w="18">31°</fit-text></count-badge></div>
<div class="a" style="margin-left:3px">${item('win',29,29)}<div style="width:1.500px"></div>${item('search',28,29)}${item('tasks',30,29)}${item('teams',27,24)}${item('sticky',26,26)}${item('files',30,28,'g')}${item('edge',30,30,'g')}${item('store',30,30)}${item('camera',30,25)}${item('armory',27,29)}${item('asus',30,30)}${item('lion',26,30,'blue','tile="white"')}${item('notes',24,30,'g')}
<task-item run="g"><ui-icon name="waround" w="30"></ui-icon><count-badge slot="badge" box="left:26px;top:4px;width:20px;height:20px;border-radius:50%;background:#292c31;color:#fff"><fit-text size="10" lh="19" weight="600" w="17">99+</fit-text></count-badge></task-item>
<task-item run="red" tile="red"><ui-icon name="tg" w="28"></ui-icon><count-badge slot="badge" box="left:27px;top:10px;width:19px;height:14px;border-radius:4px;background:#f23c34;color:#fff"><fit-text size="11.500" lh="13" w="16">..82</fit-text></count-badge></task-item>
${item('excel',30,28,'g')}
<task-item run="g"><ui-icon name="wa" w="30"></ui-icon><count-badge slot="badge" box="left:18px;top:4px;width:34px;height:20px;border-radius:10px;background:#0078d4;color:#fff"><fit-text size="14" lh="19" w="24">99+</fit-text></count-badge></task-item>
${item('photos',26,26,'g')}${item('vscode',30,30,'g')}</div>
<div class="r"><ui-icon name="up" w="16"></ui-icon><div class="x" style="margin-left:25px"><fit-text size="14.500" lh="20" w="29">ENG</fit-text><fit-text size="14.500" lh="20" w="15">IN</fit-text></div>
<ui-icon name="wifi" w="20" style="margin-left:23px"></ui-icon><ui-icon name="sound" w="20" style="margin-left:10px"></ui-icon><ui-icon name="batt" w="20" style="margin-left:10px"></ui-icon>
<div class="x" style="align-items:flex-end;margin-left:20px"><fit-text size="14.500" lh="20" w="36">20:49</fit-text><fit-text size="14.500" lh="20" w="78">19-06-2024</fit-text></div>
<ui-icon name="bell" w="16" h="19" style="margin-left:11px"></ui-icon><div class="p" style="margin-left:23px"><ui-icon name="copilot" w="29" h="28"></ui-icon><count-badge box="left:6px;top:19px;width:23px;height:9px;border-radius:3px;background:#fdc500"><fit-text size="8" lh="9" weight="700" w="16">PRE</fit-text></count-badge></div></div>`);
</script>
</body>
</html>
